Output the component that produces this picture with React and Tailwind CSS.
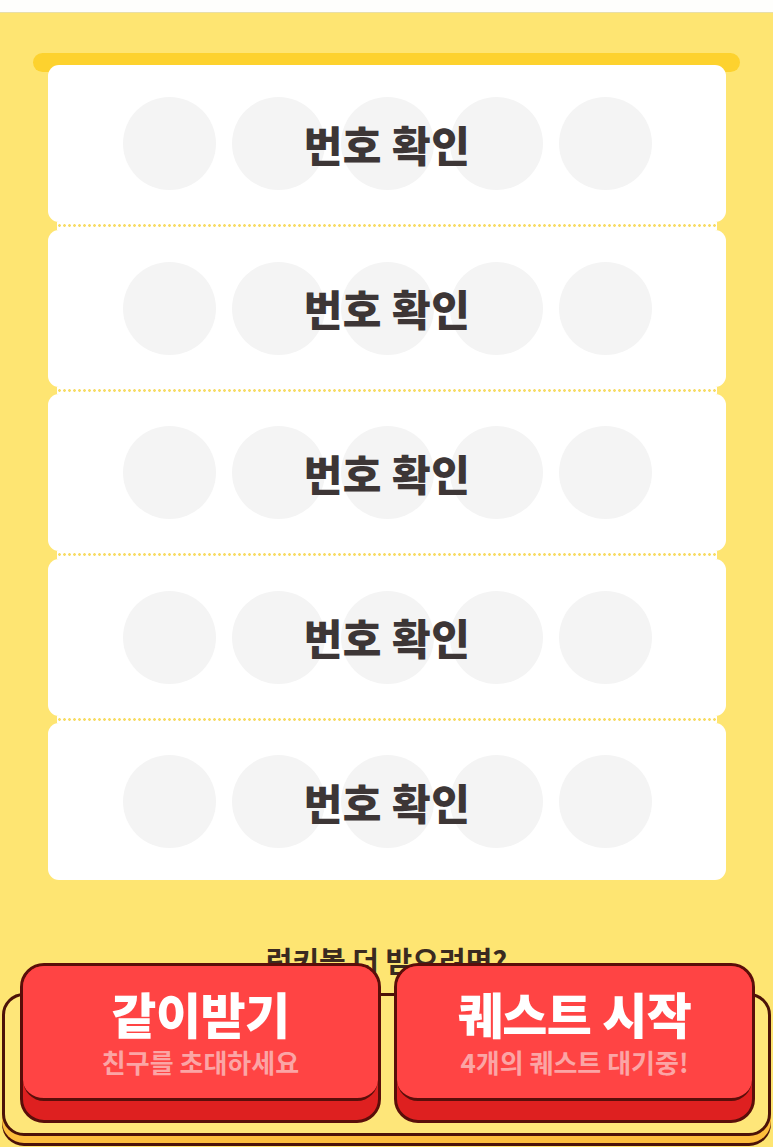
import React from "react";

const FONT = { fontFamily: '"Noto Sans CJK KR", "Noto Sans", sans-serif' };

function NumberRow() {
  return (
    <div className="grid h-[157px] place-items-center rounded-[11px] bg-white">
      <div className="col-start-1 row-start-1 flex gap-4">
        {[0, 1, 2, 3, 4].map((i) => (
          <div key={i} className="h-[93px] w-[93px] rounded-full bg-[#F4F4F4]" />
        ))}
      </div>
      <div className="col-start-1 row-start-1 text-[42px] font-black leading-none tracking-[0.5px] text-[#3D3636]">
        번호 확인
      </div>
    </div>
  );
}

function Divider() {
  return (
    <div className="mx-[9px] flex h-[7.5px] items-center bg-white">
      <div className="h-[3px] w-full bg-[radial-gradient(circle,#F7DC66_1.1px,transparent_1.6px)] bg-[length:5px_3px]" />
    </div>
  );
}

function ActionButton({ title, sub }) {
  return (
    <div className="h-[160px] rounded-[24px] border-[3px] border-[#5A0E0A] bg-[#DE2020]">
      <div className="flex h-[135px] flex-col items-center justify-center rounded-[21px] border-b-[3px] border-[#5A0E0A] bg-[#FF4444]">
        <div className="text-[49px] font-black leading-[52px] tracking-[-0.5px] text-white">{title}</div>
        <div className="mt-[8px] text-[26px] font-bold leading-[30px] text-[#FBA5A5]">{sub}</div>
      </div>
    </div>
  );
}

export default function App() {
  return (
    <div className="h-[1147px] w-[773px] overflow-hidden bg-[#FEE572]" style={FONT}>
      <div className="h-[13px] border-b border-[#E9DFA8] bg-[#FEFEFC]" />

      <div className="mx-[33px] mt-[40px] h-[19px] rounded-full bg-[#FDD22E]" />

      <div className="relative -mt-[7px] ml-[48px] mr-[47px] flex flex-col">
        <NumberRow />
        <Divider />
        <NumberRow />
        <Divider />
        <NumberRow />
        <Divider />
        <NumberRow />
        <Divider />
        <NumberRow />
      </div>

      <div className="mt-[62px] text-center text-[29px] font-bold leading-[36px] text-[#3A2A20]">
        럭키볼 더 받으려면?
      </div>

      <div className="mx-[2px] mt-[15px] rounded-[22px] border-[3px] border-[#4B1208] bg-[#FEE679] pb-[10px] shadow-[0_7px_0_#FDBD3C,0_10px_0_#4B1208]">
        <div className="-mt-[33px] grid grid-cols-2 gap-[13px] pl-[15px] pr-[13px]">
          <ActionButton title="같이받기" sub="친구를 초대하세요" />
          <ActionButton title="퀘스트 시작" sub="4개의 퀘스트 대기중!" />
        </div>
      </div>
    </div>
  );
}
